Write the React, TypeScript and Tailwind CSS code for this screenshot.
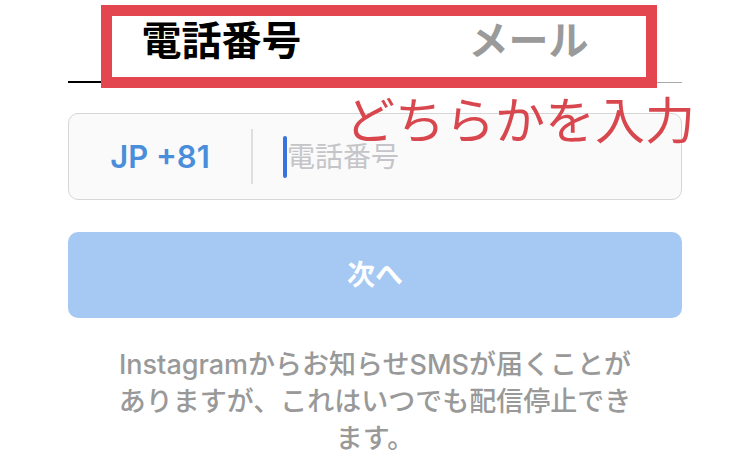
import React from "react";

export default function App() {
  return (
    <div
      className="relative w-[750px] h-[473px] bg-white overflow-hidden"
      style={{ fontFamily: '"Inter", "Noto Sans CJK JP", sans-serif' }}
    >
      <div className="px-[68px]">
        {/* Tabs */}
        <div className="flex">
          <div className="flex-1 h-[83px] flex items-center justify-center border-b-2 border-black text-[40px] font-bold text-black leading-none">
            電話番号
          </div>
          <div className="flex-1 h-[83px] flex items-center justify-center border-b border-[#a9a9a9] text-[40px] font-bold text-[#9a9a9a] leading-none">
            メール
          </div>
        </div>

        {/* Phone input */}
        <div className="mt-[30px] h-[87px] rounded-[10px] border border-[#d6d6d6] bg-[#fafafa] flex items-center">
          <div className="w-[182px] flex justify-center text-[31px] font-semibold text-[#4a8edb] leading-none">
            JP +81
          </div>
          <div className="w-[2px] h-[55px] bg-[#dedede]" />
          <div className="flex items-center pl-[30px]">
            <div className="w-[4px] h-[42px] rounded-full bg-[#3a72e0]" />
            <span className="text-[28px] text-[#c5c5c9] leading-none">電話番号</span>
          </div>
        </div>

        {/* Next button */}
        <div className="mt-[32px] h-[86px] rounded-[10px] bg-[#a5c9f2] flex items-center justify-center text-[28px] font-bold text-white leading-none">
          次へ
        </div>

        {/* Info text */}
        <p className="mt-[28px] text-center text-[27px] font-medium text-[#999999] leading-[37px]">
          Instagramからお知らせSMSが届くことが
          <br />
          ありますが、これはいつでも配信停止でき
          <br />
          ます。
        </p>
      </div>

      {/* Annotation overlay */}
      <div className="absolute left-[101px] top-[5px] w-[556px] h-[83px] border-[11px] border-[#e44650]" />
      <div className="absolute left-[345px] top-[96px] text-[50px] leading-none text-[#d9474e]">
        どちらかを入力
      </div>
    </div>
  );
}
